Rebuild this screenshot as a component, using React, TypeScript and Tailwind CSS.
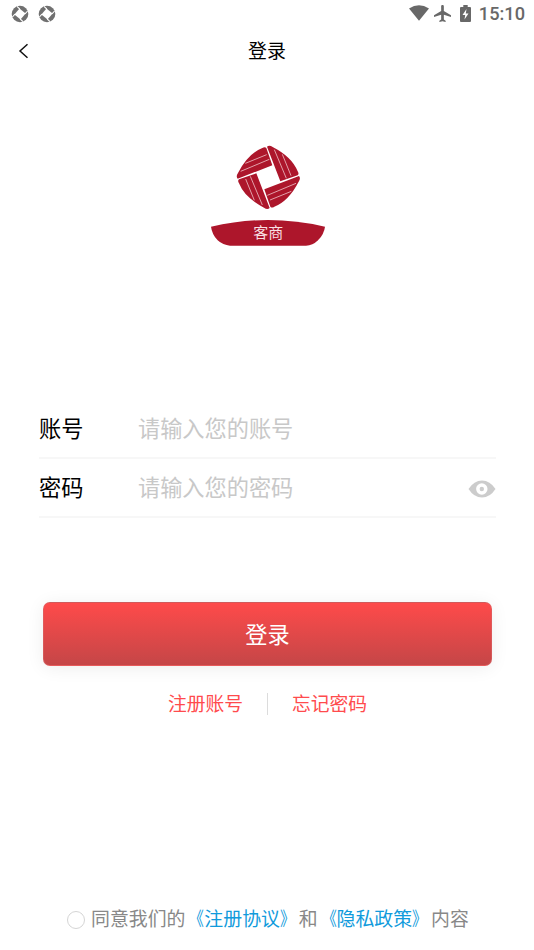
import React from "react";

function SyncIcon() {
  return (
    <svg width="18" height="18" viewBox="0 0 18 18">
      <circle cx="9" cy="9" r="8.3" fill="#707070" />
      <path d="M8.500 3.400 14.600 8.500 9.500 14.600 3.400 9.500Z" fill="#fff" />
      <g stroke="#fff" strokeWidth="1.100" fill="none">
        <path d="M8.800 4 6 1.400M14 8.800 16.600 6M9.200 14 12 16.600M4 9.200 1.400 12" />
      </g>
    </svg>
  );
}

function Logo() {
  return (
    <svg width="140" height="115" viewBox="0 0 420 345">
      <defs>
        <g id="petal">
          <path d="M-92 4Q-98 -3 -91 -13Q-61 -71 -18 -88Q-10 -93 -6 -88L12 -36Z" fill="#ad162b" />
          <path d="M-5 -68-69 -42M3 -54-83 -18" stroke="#e2a0a9" strokeWidth="3" />
        </g>
      </defs>
      <g transform="translate(205 118)">
        <use href="#petal" />
        <use href="#petal" transform="rotate(90)" />
        <use href="#petal" transform="rotate(180)" />
        <use href="#petal" transform="rotate(270)" />
      </g>
      <path d="M33 266Q120 246 204 246Q290 246 375 266Q372 289 354 307Q338 323 318 323H90Q69 322 53 307Q36 289 33 266Z" fill="#ad162b" />
      <text x="205" y="301" textAnchor="middle" fill="#f8dfe2" fontSize="45" className="font-['Noto_Sans_CJK_SC',sans-serif]">
        客商
      </text>
    </svg>
  );
}

function Field({ label, placeholder, eye = false }: { label: string; placeholder: string; eye?: boolean }) {
  return (
    <label className="flex h-[59px] items-center border-b-2 border-[#f7f7f7] text-[22.2px]">
      <span className="w-[99px] pb-[2px] text-black">{label}</span>
      <input
        type={eye ? "password" : "text"}
        placeholder={placeholder}
        className="w-0 flex-1 bg-transparent pb-[2px] outline-none placeholder:text-[#c8c8c8]"
      />
      {eye && (
        <svg width="28" height="18" viewBox="0 0 28 18" className="mt-[2px]">
          <path d="M.5 9Q6 .5 14 .5T27.5 9Q22 17.5 14 17.5T.5 9Z" fill="#ccc" />
          <circle cx="13.8" cy="9" r="5.7" fill="#fff" />
          <circle cx="13.8" cy="9" r="2.2" fill="#ccc" />
        </svg>
      )}
    </label>
  );
}

function PolicyLink({ title }: { title: string }) {
  return (
    <a className="text-[#119bdc]">
      <span className="inline-block origin-right scale-x-80">《</span>
      {title}
      <span className="inline-block origin-left scale-x-80">》</span>
    </a>
  );
}

export default function App() {
  return (
    <main className="flex h-[950px] w-[534px] flex-col overflow-hidden bg-white font-['Noto_Sans_CJK_SC',sans-serif]">
      <div className="flex h-[27px] shrink-0 items-center justify-between pr-[9px] pl-[11px]">
        <div className="flex gap-[9px]">
          <SyncIcon />
          <SyncIcon />
        </div>
        <div className="flex items-center text-[#686868]">
          <svg width="20" height="16" viewBox="0 0 20 16" fill="currentColor">
            <path d="M0 3.5Q10-3 20 3.5L10 15.7Z" />
          </svg>
          <svg width="17" height="17" viewBox="2 2 19 20" preserveAspectRatio="none" fill="currentColor" className="ml-[5px]">
            <path d="M21 16v-2l-8-5V3.5c0-.83-.67-1.5-1.5-1.5S10 2.67 10 3.5V9l-8 5v2l8-2.5V19l-2 1.5V22l3.5-1 3.5 1v-1.500L13 19v-5.500l8 2.500z" />
          </svg>
          <svg width="11" height="17" viewBox="0 0 11 17" className="ml-[9px]">
            <path d="M3.300 0h4.400v2H10q1 0 1 1v13q0 1-1 1H1q-1 0-1-1V3q0-1 1-1h2.300Z" fill="currentColor" />
            <path d="M6.500 4 2.500 10h2.700L4.500 14.500 8.500 8.500H5.800Z" fill="#fff" />
          </svg>
          <span className="mt-[2px] ml-[8px] font-[Roboto,sans-serif] text-[18.200px] leading-none font-medium">15:10</span>
        </div>
      </div>
      <header className="grid h-[46px] shrink-0 grid-cols-[48px_1fr_48px] items-center">
        <button aria-label="返回" className="pt-[2px] pl-[18px]">
          <svg width="11" height="16" viewBox="0 0 11 16" fill="none" stroke="#111" strokeWidth="1.500">
            <path d="M9.500 1.200 2 8l7.500 6.800" />
          </svg>
        </button>
        <h1 className="text-center text-[18.900px] leading-none text-black">登录</h1>
      </header>
      <div className="mt-[65px] flex h-[115px] shrink-0 pl-[200px]">
        <Logo />
      </div>
      <form className="mt-[147px] mr-[38px] ml-[39px]">
        <Field label="账号" placeholder="请输入您的账号" />
        <Field label="密码" placeholder="请输入您的密码" eye />
      </form>
      <button className="mt-[84px] ml-[43px] h-[64px] w-[449px] shrink-0 rounded-[7px] border border-[#d96567]/60 bg-linear-to-b from-[#fe4a4a] to-[#c54647] text-[22.200px] text-white shadow-[0_2px_18px_rgba(0,0,0,0.07)]">
        登录
      </button>
      <nav className="mt-[23px] flex h-[28px] shrink-0 items-center justify-center pl-px text-[18.800px] leading-none text-[#ff4b4d]">
        <a>注册账号</a>
        <span className="mx-[24px] mt-[2px] h-[22px] w-px bg-[#dcdcdc]" />
        <a>忘记密码</a>
      </nav>
      <footer className="mt-auto mb-[18px] flex h-[28px] shrink-0 items-center pl-[67px] text-[18.900px] leading-none whitespace-nowrap text-[#888]">
        <span className="mt-[3px] mr-[6px] size-[18px] shrink-0 rounded-full border border-[#d5d5d5]" />
        <p>
          同意我们的
          <PolicyLink title="注册协议" />和<PolicyLink title="隐私政策" />
          内容
        </p>
      </footer>
    </main>
  );
}
